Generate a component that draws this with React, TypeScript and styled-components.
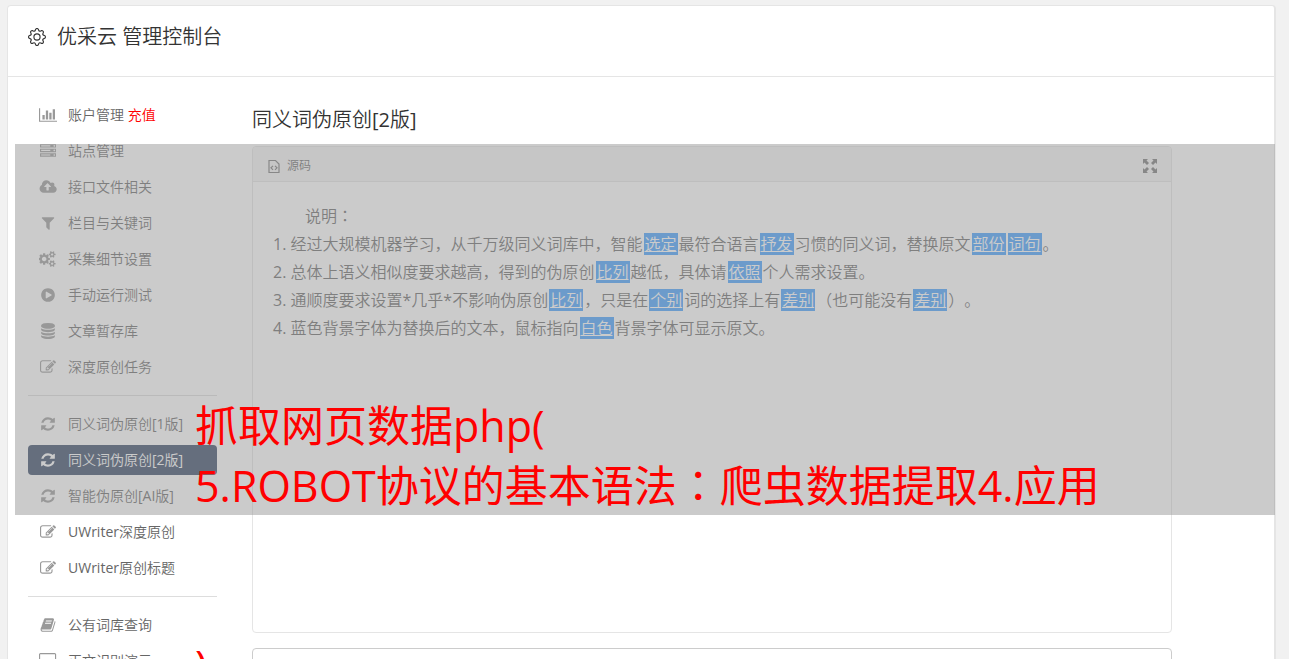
import React from 'react';
import styled, { createGlobalStyle } from 'styled-components';
import { BsGear } from 'react-icons/bs';

const GlobalStyle = createGlobalStyle`
  *, *::before, *::after { box-sizing: border-box; }
  body {
    margin: 0;
    background: #f1f1f1;
    color: #666;
    font-family: 'Open Sans', 'Noto Sans CJK SC DemiLight', 'Noto Sans CJK SC Light', 'Noto Sans CJK SC', sans-serif;
    font-weight: 400;
    font-size: 14px;
    text-spacing-trim: space-all;
  }
`;

const Page = styled.div`
  position: relative;
  height: 100vh;
  overflow: hidden;
  padding: 5px 13px 0 7px;
`;

const Card = styled.div`
  min-height: 100%;
  background: #fff;
  border: 1px solid #e5e5e5;
  border-right-width: 2px;
  border-radius: 4px 4px 0 0;
`;

const Header = styled.header`
  display: flex;
  align-items: center;
  gap: 11px;
  height: 71px;
  padding: 0 20px 8px;
  border-bottom: 1px solid #e5e5e5;
  color: #333;
`;

const Title = styled.h1`
  margin: 0;
  font-size: 20px;
  line-height: 28px;
  font-weight: 400;
`;

const Columns = styled.div`
  display: flex;
  gap: 35px;
  padding: 23px 102px 0 20px;
`;

const Sidebar = styled.nav`
  display: flex;
  flex-direction: column;
  gap: 6px;
  flex: 0 0 189px;
`;

const NavLink = styled.a<{ $active?: boolean }>`
  display: flex;
  align-items: center;
  gap: 10px;
  height: 30px;
  padding: 0 10px;
  border-radius: 4px;
  line-height: 20px;
  white-space: nowrap;
  text-decoration: none;
  color: ${p => (p.$active ? '#fff' : '#666')};
  background: ${p => (p.$active ? '#334563' : 'transparent')};
  svg { color: ${p => (p.$active ? '#fff' : '#999')}; }
`;

const IconSlot = styled.span`
  display: flex;
  justify-content: center;
  flex: 0 0 20px;
`;

const Recharge = styled.span`
  color: #f00;
`;

const Divider = styled.hr`
  width: 100%;
  margin: 7px 0;
  border: 0;
  border-top: 1px solid #ddd;
`;

const Main = styled.main`
  flex: 1;
  min-width: 0;
`;

const SectionTitle = styled.h2`
  margin: 6px 0 12px;
  font-size: 20px;
  line-height: 28px;
  font-weight: 400;
  color: #333;
`;

const Panel = styled.section`
  min-height: 487px;
  border: 1px solid #e5e5e5;
  border-radius: 4px;
`;

const PanelBar = styled.div`
  display: flex;
  align-items: center;
  justify-content: space-between;
  height: 35px;
  padding: 3px 14px 0 15px;
  background: #f5f5f5;
  border-bottom: 1px solid #e5e5e5;
  border-radius: 3px 3px 0 0;
`;

const BarButton = styled.button`
  display: flex;
  align-items: center;
  gap: 7px;
  padding: 0;
  border: 0;
  background: none;
  color: #666;
  font: inherit;
  font-size: 12px;
  line-height: 20px;
  svg { color: #777; }
`;

const Article = styled.div`
  padding: 20px;
  font-size: 16px;
  line-height: 28px;
`;

const Line = styled.p<{ $indent?: boolean }>`
  margin: 0;
  text-indent: ${p => (p.$indent ? '32px' : '0')};
`;

const Swap = styled.span`
  margin: 0 1px;
  padding: 0 1px;
  color: #fff;
  background: #409eff;
  text-decoration: underline;
`;

const Centered = styled.span`
  font-family: 'Noto Sans CJK TC DemiLight', 'Noto Sans CJK TC', sans-serif;
  line-height: 1;
`;

const Output = styled.textarea`
  display: block;
  width: 100%;
  height: 160px;
  margin-top: 15px;
  border: 1px solid #ccc;
  border-radius: 4px;
  resize: none;
`;

const Shade = styled.div`
  position: absolute;
  top: 144px;
  left: 15px;
  right: 14px;
  height: 371px;
  background: rgba(151, 151, 151, 0.5);
  pointer-events: none;
`;

const Caption = styled.div`
  position: absolute;
  top: 396px;
  left: 195px;
  color: #f00;
  font-family: 'Open Sans', 'Noto Sans CJK SC', sans-serif;
  font-size: 43px;
  line-height: 60px;
  white-space: pre;
  pointer-events: none;
`;

type Glyph = { d: string; box?: number };

const glyphs: Record<string, Glyph> = {
  chart: { box: 2048, d: 'M640 896v512h-256v-512h256zM1024 384v1024h-256v-1024h256zM2048 1536v128h-2048v-1536h128v1408h1920zM1408 640v768h-256v-768h256zM1792 256v1152h-256v-1152h256z' },
  server: { d: 'M128 1408h1024v-128h-1024v128zM128 896h1024v-128h-1024v128zM1696 1344q0-40-28-68t-68-28-68 28-28 68 28 68 68 28 68-28 28-68zM128 384h1024v-128h-1024v128zM1696 832q0-40-28-68t-68-28-68 28-28 68 28 68 68 28 68-28 28-68zM1696 320q0-40-28-68t-68-28-68 28-28 68 28 68 68 28 68-28 28-68zM1792 1152v384h-1792v-384h1792zM1792 640v384h-1792v-384h1792zM1792 128v384h-1792v-384h1792z' },
  cloud: { box: 2048, d: 'M1344 864q0-14-9-23l-352-352q-9-9-23-9t-23 9l-351 351q-10 12-10 24 0 14 9 23t23 9h224v352q0 13 9.5 22.5t22.5 9.5h192q13 0 22.5-9.5t9.5-22.5v-352h224q13 0 22.5-9.5t9.5-22.5zM1984 1152q0 159-112.5 271.5t-271.5 112.5h-1088q-185 0-316.5-131.5t-131.5-316.5q0-130 70-240t188-165q-2-30-2-43 0-212 150-362t362-150q156 0 285.5 87t188.5 231q71-62 166-62 106 0 181 75t75 181q0 76-41 138 130 31 213.5 135.5t83.5 238.5z' },
  filter: { d: 'M1595 295q17 41-14 70l-493 493v742q0 42-39 59-13 5-25 5-27 0-45-19l-256-256q-19-19-19-45v-486l-493-493q-31-29-14-70 17-39 59-39h1280q42 0 59 39z' },
  cogs: { box: 1920, d: 'M832 896q0-106-75-181t-181-75-181 75-75 181 75 181 181 75 181-75 75-181zm768 512q0-52-38-90t-90-38-90 38-38 90q0 53 37.5 90.5t90.5 37.5 90.5-37.5 37.5-90.5zm0-1024q0-52-38-90t-90-38-90 38-38 90q0 53 37.5 90.5t90.5 37.5 90.5-37.5 37.5-90.5zm-384 421v185q0 10-7 19.5t-16 10.5l-155 24q-11 35-32 76 34 48 90 115 7 11 7 20 0 12-7 19-23 30-82.5 89.5t-78.5 59.5q-11 0-21-7l-115-90q-37 19-77 31-11 108-23 155-7 24-30 24h-186q-11 0-20-7.5t-10-17.5l-23-153q-34-10-75-31l-118 89q-7 7-20 7-11 0-21-8-144-133-144-160 0-9 7-19 10-14 41-53t47-61q-23-44-35-82l-152-24q-10-1-17-9.5t-7-19.5v-185q0-10 7-19.5t16-10.5l155-24q11-35 32-76-34-48-90-115-7-11-7-20 0-12 7-20 22-30 82-89t79-59q11 0 21 7l115 90q34-18 77-32 11-108 23-154 7-24 30-24h186q11 0 20 7.5t10 17.5l23 153q34 10 75 31l118-89q8-7 20-7 11 0 21 8 144 133 144 160 0 8-7 19-12 16-42 54t-45 60q23 48 34 82l152 23q10 2 17 10.5t7 19.5zm640 533v140q0 16-149 31-12 27-30 52 51 113 51 138 0 4-4 7-122 71-124 71-8 0-46-47t-52-68q-20 2-30 2t-30-2q-14 21-52 68t-46 47q-2 0-124-71-4-3-4-7 0-25 51-138-18-25-30-52-149-15-149-31v-140q0-16 149-31 13-29 30-52-51-113-51-138 0-4 4-7 4-2 35-20t59-34 30-16q8 0 46 46.5t52 67.5q20-2 30-2t30 2q51-71 92-112l6-2q4 0 124 70 4 3 4 7 0 25-51 138 17 23 30 52 149 15 149 31zm0-1024v140q0 16-149 31-12 27-30 52 51 113 51 138 0 4-4 7-122 71-124 71-8 0-46-47t-52-68q-20 2-30 2t-30-2q-14 21-52 68t-46 47q-2 0-124-71-4-3-4-7 0-25 51-138-18-25-30-52-149-15-149-31v-140q0-16 149-31 13-29 30-52-51-113-51-138 0-4 4-7 4-2 35-20t59-34 30-16q8 0 46 46.5t52 67.5q20-2 30-2t30 2q51-71 92-112l6-2q4 0 124 70 4 3 4 7 0 25-51 138 17 23 30 52 149 15 149 31z' },
  play: { d: 'M896 128q209 0 385.5 103t279.5 279.5 103 385.5-103 385.5-279.5 279.5-385.5 103-385.5-103-279.5-279.5-103-385.5 103-385.5 279.5-279.5 385.5-103zm384 823q32-18 32-55t-32-55l-544-320q-31-19-64-1-32 19-32 56v640q0 37 32 56 16 8 32 8 17 0 32-9z' },
  database: { d: 'M896 768q237 0 443-43t325-127v170q0 69-103 128t-280 93.5-385 34.5-385-34.5-280-93.5-103-128v-170q119 84 325 127t443 43zm0 768q237 0 443-43t325-127v170q0 69-103 128t-280 93.5-385 34.5-385-34.5-280-93.5-103-128v-170q119 84 325 127t443 43zm0-384q237 0 443-43t325-127v170q0 69-103 128t-280 93.5-385 34.5-385-34.5-280-93.5-103-128v-170q119 84 325 127t443 43zm0-1152q208 0 385 34.5t280 93.5 103 128v128q0 69-103 128t-280 93.5-385 34.5-385-34.5-280-93.5-103-128v-128q0-69 103-128t280-93.5 385-34.5z' },
  edit: { d: 'M888 1184l116-116-152-152-116 116v56h96v96h56zm440-720q-16-16-33 1l-350 350q-17 17-1 33t33-1l350-350q17-17 1-33zm80 594v190q0 119-84.5 203.5t-203.5 84.5h-832q-119 0-203.5-84.5t-84.5-203.5v-832q0-119 84.5-203.5t203.5-84.5h832q63 0 117 25 15 7 18 23 3 17-9 29l-49 49q-14 14-32 8-23-6-45-6h-832q-66 0-113 47t-47 113v832q0 66 47 113t113 47h832q66 0 113-47t47-113v-126q0-13 9-22l64-64q15-15 35-7t20 29zm-96-738l288 288-672 672h-288v-288zm444 132l-92 92-288-288 92-92q28-28 68-28t68 28l152 152q28 28 28 68t-28 68z' },
  refresh: { d: 'M1639 1056q0 5-1 7-64 268-268 434.5t-478 166.5q-146 0-282.5-55t-243.5-157l-129 129q-19 19-45 19t-45-19-19-45v-448q0-26 19-45t45-19h448q26 0 45 19t19 45-19 45l-137 137q71 66 161 102t187 36q134 0 250-65t186-179q11-17 53-117 8-23 30-23h192q13 0 22.5 9.5t9.5 22.5zm25-800v448q0 26-19 45t-45 19h-448q-26 0-45-19t-19-45 19-45l138-138q-148-137-349-137-134 0-250 65t-186 179q-11 17-53 117-8 23-30 23h-199q-13 0-22.5-9.5t-9.5-22.5v-7q65-268 270-434.5t480-166.5q146 0 284 55.5t245 156.5l130-129q19-19 45-19t45 19 19 45z' },
  book: { d: 'M1703 478q40 57 18 129l-275 906q-19 64-76.5 107.5t-122.5 43.5h-923q-77 0-148.5-53.5t-99.5-131.5q-24-67-2-127 0-4 3-27t4-37q1-8-3-21.5t-3-19.5q2-11 8-21t16.5-23.5 16.5-23.5q23-38 45-91.5t30-91.5q3-10 .5-30t-.5-28q3-11 17-28t17-23q21-36 42-92t25-90q1-9-2.5-32t.5-28q4-13 22-30.5t22-22.5q19-26 42.5-84.5t27.5-96.5q1-8-3-25.5t-2-26.5q2-8 9-18t18-23 17-21q8-12 16.5-30.5t15-35 16-36 19.5-32 26.5-23.5 36-11.5 47.5 5.5l-1 3q38-9 51-9h761q74 0 114 56t18 130l-274 906q-36 119-71.5 153.5t-128.5 34.5h-869q-27 0-38 15-11 16-1 43 24 70 144 70h923q29 0 56-15.5t35-41.5l300-987q7-22 5-57 38 15 59 43zm-1064 2q-4 13 2 22.5t20 9.5h608q13 0 25.5-9.5t16.5-22.5l21-64q4-13-2-22.5t-20-9.5h-608q-13 0-25.5 9.5t-16.5 22.5zm-83 256q-4 13 2 22.5t20 9.5h608q13 0 25.5-9.5t16.5-22.5l21-64q4-13-2-22.5t-20-9.5h-608q-13 0-25.5 9.5t-16.5 22.5z' },
  desktop: { box: 1920, d: 'M1792 992v-832q0-13-9.500-22.500t-22.500-9.500h-1600q-13 0-22.500 9.500t-9.500 22.500v832q0 13 9.500 22.500t22.500 9.500h1600q13 0 22.500-9.500t9.500-22.500zM1920 160v1088q0 66-47 113t-113 47h-544q0 37 16 77.500t32 71 16 43.500q0 26-19 45t-45 19h-512q-26 0-45-19t-19-45q0-14 16-44t32-70 16-78h-544q-66 0-113-47t-47-113v-1088q0-66 47-113t113-47h1600q66 0 113 47t47 113z' },
};

function NavIcon({ name }: { name: string }) {
  const { d, box = 1792 } = glyphs[name];
  return (
    <svg width={(box / 1792) * 16} height="16" viewBox={`0 0 ${box} 1792`} fill="currentColor" aria-hidden="true">
      <path d={d} />
    </svg>
  );
}

type NavItem = { icon: string; label: string; active?: boolean; extra?: string };

const navGroups: NavItem[][] = [
  [
    { icon: 'chart', label: '账户管理', extra: '充值' },
    { icon: 'server', label: '站点管理' },
    { icon: 'cloud', label: '接口文件相关' },
    { icon: 'filter', label: '栏目与关键词' },
    { icon: 'cogs', label: '采集细节设置' },
    { icon: 'play', label: '手动运行测试' },
    { icon: 'database', label: '文章暂存库' },
    { icon: 'edit', label: '深度原创任务' },
  ],
  [
    { icon: 'refresh', label: '同义词伪原创[1版]' },
    { icon: 'refresh', label: '同义词伪原创[2版]', active: true },
    { icon: 'refresh', label: '智能伪原创[AI版]' },
    { icon: 'edit', label: 'UWriter深度原创' },
    { icon: 'edit', label: 'UWriter原创标题' },
  ],
  [
    { icon: 'book', label: '公有词库查询' },
    { icon: 'desktop', label: '正文识别演示' },
  ],
];

// Words between braces are the ones that were replaced by a synonym.
const lines = [
  '1. 经过大规模机器学习，从千万级同义词库中，智能{选定}最符合语言{抒发}习惯的同义词，替换原文{部份}{词句}。',
  '2. 总体上语义相似度要求越高，得到的伪原创{比列}越低，具体请{依照}个人需求设置。',
  '3. 通顺度要求设置*几乎*不影响伪原创{比列}，只是在{个别}词的选择上有{差别}（也可能没有{差别}）。',
  '4. 蓝色背景字体为替换后的文本，鼠标指向{白色}背景字体可显示原文。',
];

function RichText({ text }: { text: string }) {
  return (
    <>
      {text.split(/(\{[^}]+\}|：)/).map((part, i) => {
        if (part.startsWith('{')) return <Swap key={i}>{part.slice(1, -1)}</Swap>;
        if (part === '：') return <Centered key={i} lang="zh-TW">{part}</Centered>;
        return part;
      })}
    </>
  );
}

export default function App() {
  return (
    <>
      <GlobalStyle />
      <Page lang="zh-CN">
        <Card>
          <Header>
            <BsGear size={18} aria-hidden="true" />
            <Title>优采云 管理控制台</Title>
          </Header>
          <Columns>
            <Sidebar>
              {navGroups.map((group, g) => (
                <React.Fragment key={g}>
                  {g > 0 && <Divider />}
                  {group.map(item => (
                    <NavLink key={item.label} href="#" $active={item.active}>
                      <IconSlot><NavIcon name={item.icon} /></IconSlot>
                      <span>
                        {item.label}
                        {item.extra && <> <Recharge>{item.extra}</Recharge></>}
                      </span>
                    </NavLink>
                  ))}
                </React.Fragment>
              ))}
            </Sidebar>
            <Main>
              <SectionTitle>同义词伪原创[2版]</SectionTitle>
              <Panel>
                <PanelBar>
                  <BarButton type="button">
                    <svg width="12" height="16" viewBox="0 0 12 16" fill="none" stroke="currentColor" aria-hidden="true">
                      <path d="M1 2.500h6.500l3.500 3.500v8.500H1z" strokeWidth="1.200" />
                      <path d="M5 7.800L3 9.800L5 11.800M7 7.800l2 2L7 11.800" strokeWidth="1.200" />
                    </svg>
                    源码
                  </BarButton>
                  <BarButton type="button" aria-label="全屏">
                    <svg width="14" height="14" viewBox="0 0 14 14" fill="currentColor" aria-hidden="true">
                      <path d="M0 0h5L3.500 1.500L6 4L4 6L1.500 3.500L0 5zM14 0v5l-1.500-1.500L10 6L8 4l2.500-2.500L9 0zM0 14V9l1.500 1.500L4 8l2 2l-2.500 2.500L5 14zM14 14H9l1.500-1.500L8 10l2-2l2.500 2.500L14 9z" />
                    </svg>
                  </BarButton>
                </PanelBar>
                <Article>
                  <Line $indent><RichText text="说明：" /></Line>
                  {lines.map(text => (
                    <Line key={text}><RichText text={text} /></Line>
                  ))}
                </Article>
              </Panel>
              <Output aria-label="结果" />
            </Main>
          </Columns>
        </Card>
        <Shade />
        <Caption>
          {'抓取网页数据php(\n5.ROBOT协议的基本语法'}
          <Centered lang="zh-TW">：</Centered>
          {'爬虫数据提取4.应用\n\n\n)'}
        </Caption>
      </Page>
    </>
  );
}
